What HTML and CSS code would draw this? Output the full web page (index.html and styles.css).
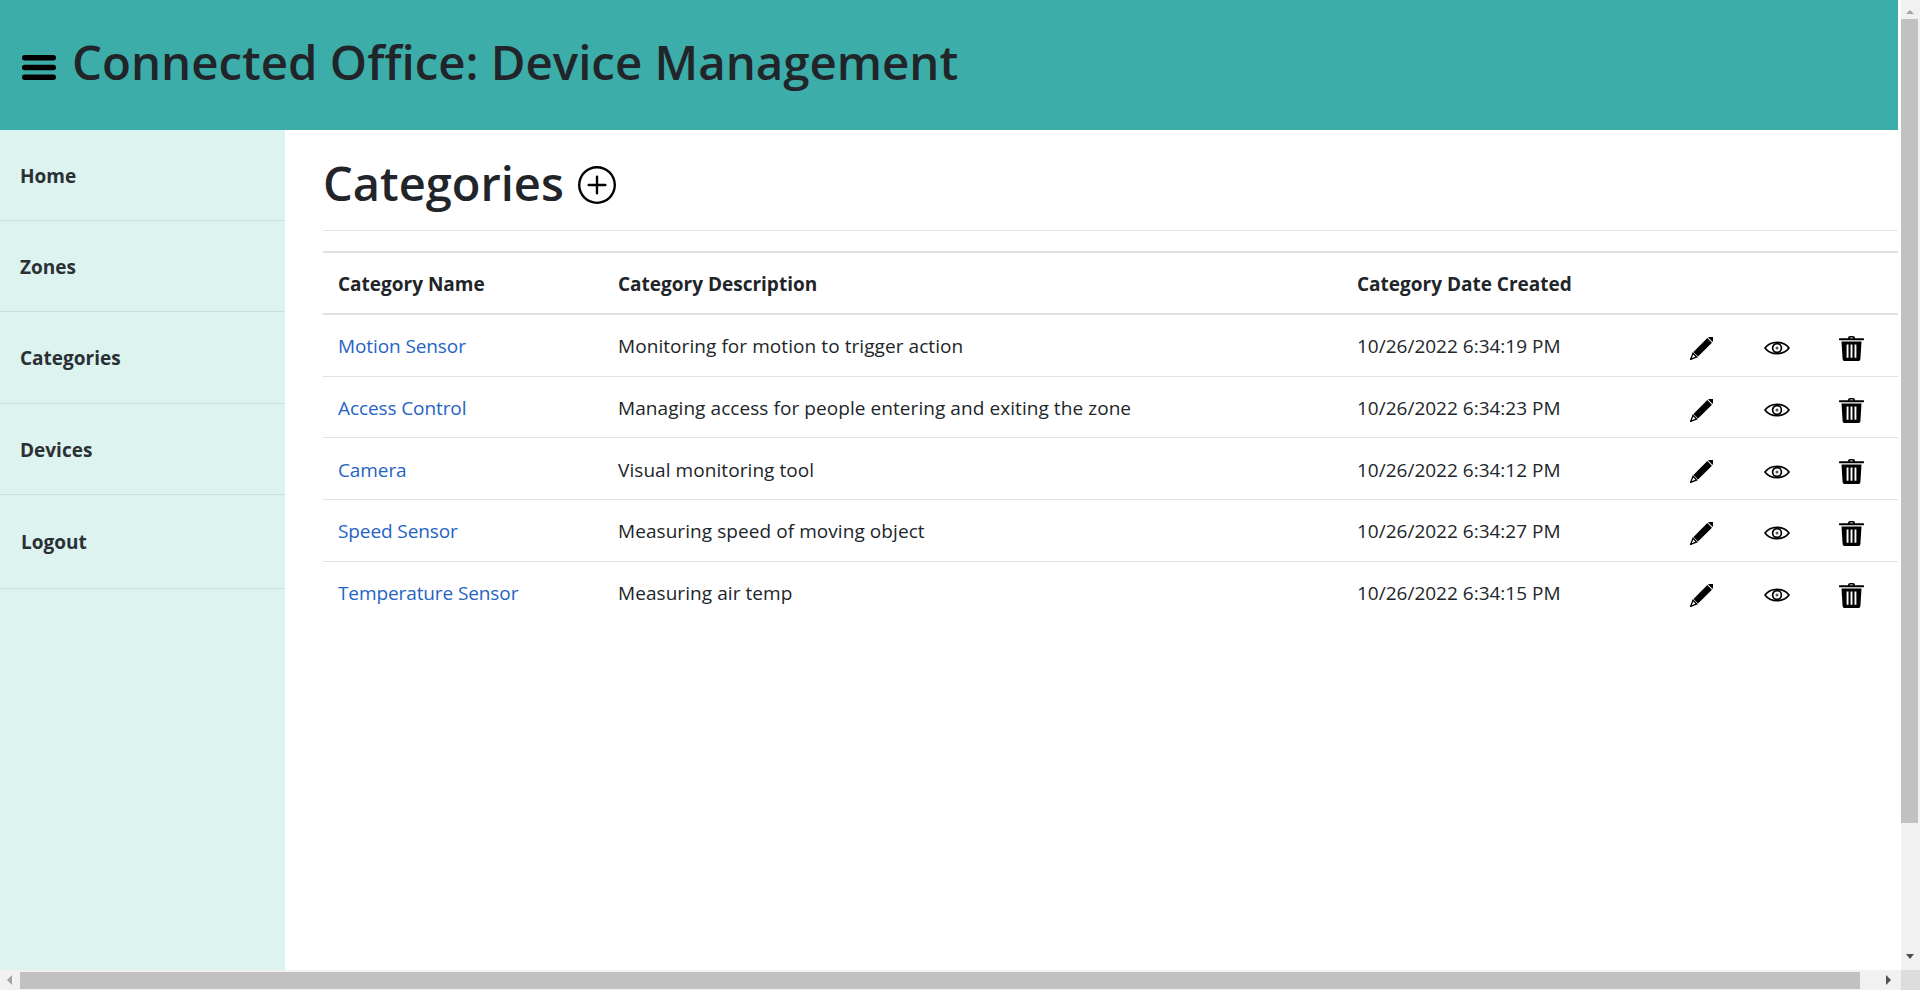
FILE: index.html
```html
<!DOCTYPE html>
<html lang="en">
<head>
    <meta charset="UTF-8">
    <title>Connected Office: Device Management</title>
    <link rel="stylesheet" href="styles.css">
</head>
<body>
    <svg class="icon-defs" width="0" height="0">
        <symbol id="i-pencil" viewBox="0 0 24 24">
            <g transform="rotate(45 12 12)">
                <rect x="8.6" y="-5" width="6.8" height="4" rx="1"/>
                <rect x="8.6" y="0" width="6.8" height="20.5"/>
                <path d="M9.3 21.8h5.4L12 28z" fill="none" stroke="#000" stroke-width="1.4"/>
                <path d="M10.9 26h2.2L12 29z"/>
            </g>
        </symbol>
        <symbol id="i-eye" viewBox="0 0 26 14">
            <path d="M1 7C6.5-.6 19.5-.6 25 7 19.5 14.6 6.5 14.6 1 7z" fill="none" stroke="#000" stroke-width="1.7"/>
            <circle cx="13" cy="7" r="4.4" fill="none" stroke="#000" stroke-width="1.7"/>
            <circle cx="13" cy="7" r="1.5" fill="#555"/>
        </symbol>
        <symbol id="i-trash" viewBox="0 0 25 25">
            <path d="M9 2.2C9 .8 10 0 11 0h3c1 0 2 .8 2 2.2h8.5c.3 0 .5.2.5.5v1.1c0 .3-.2.5-.5.5H.5C.2 4.300 0 4.100 0 3.800V2.700c0-.3.200-.5.500-.5zM10.700 2.200h3.600c0-.4-.2-.6-.6-.6h-2.400c-.4 0-.6.200-.6.600z" fill-rule="evenodd"/>
            <path d="M2.500 5.600h20l-1.100 17.300c-.1 1.200-1 2.100-2.200 2.100H5.800c-1.200 0-2.100-.9-2.200-2.100zM7.600 8.500v13.200h1.900V8.500zM11.550 8.500v13.200h1.900V8.500zM15.500 8.500v13.200h1.900V8.500z" fill-rule="evenodd"/>
        </symbol>
    </svg>

    <div class="viewport">
        <div class="page">
            <header class="topbar">
                <svg class="menu-icon" viewBox="0 0 34 25"><rect width="34" height="5.500" rx="2.700"/><rect y="9.800" width="34" height="5.500" rx="2.700"/><rect y="19.500" width="34" height="5.500" rx="2.700"/></svg>
                <h1 class="site-title">Connected Office: Device Management</h1>
            </header>
            <div class="layout">
                <nav class="sidebar">
                    <a class="nav-item" href="#">Home</a>
                    <a class="nav-item" href="#">Zones</a>
                    <a class="nav-item" href="#">Categories</a>
                    <a class="nav-item" href="#">Devices</a>
                    <a class="nav-item nav-logout" href="#">Logout</a>
                </nav>
                <main class="content">
                    <div class="page-head">
                        <h2 class="page-title">Categories</h2>
                        <svg class="add-icon" viewBox="0 0 16 16"><path d="M8 15A7 7 0 1 1 8 1a7 7 0 0 1 0 14zm0 1A8 8 0 1 0 8 0a8 8 0 0 0 0 16z"/><path d="M8 4a.5.5 0 0 1 .5.5v3h3a.5.5 0 0 1 0 1h-3v3a.5.5 0 0 1-1 0v-3h-3a.5.5 0 0 1 0-1h3v-3A.5.5 0 0 1 8 4z"/></svg>
                    </div>
                    <table class="data-table">
                        <colgroup>
                            <col class="col-name">
                            <col class="col-desc">
                            <col class="col-date">
                            <col class="col-action">
                            <col class="col-action">
                            <col>
                        </colgroup>
                        <thead>
                            <tr>
                                <th>Category Name</th>
                                <th>Category Description</th>
                                <th>Category Date Created</th>
                                <th></th>
                                <th></th>
                                <th></th>
                            </tr>
                        </thead>
                        <tbody>
                            <tr>
                                <td><a href="#">Motion Sensor</a></td>
                                <td class="desc">Monitoring for motion to trigger action</td>
                                <td>10/26/2022 6:34:19 PM</td>
                                <td class="action"><svg class="row-icon pencil"><use href="#i-pencil"/></svg></td>
                                <td class="action"><svg class="row-icon eye"><use href="#i-eye"/></svg></td>
                                <td class="action last"><svg class="row-icon trash"><use href="#i-trash"/></svg></td>
                            </tr>
                            <tr>
                                <td><a href="#">Access Control</a></td>
                                <td class="desc">Managing access for people entering and exiting the zone</td>
                                <td>10/26/2022 6:34:23 PM</td>
                                <td class="action"><svg class="row-icon pencil"><use href="#i-pencil"/></svg></td>
                                <td class="action"><svg class="row-icon eye"><use href="#i-eye"/></svg></td>
                                <td class="action last"><svg class="row-icon trash"><use href="#i-trash"/></svg></td>
                            </tr>
                            <tr>
                                <td><a href="#">Camera</a></td>
                                <td class="desc">Visual monitoring tool</td>
                                <td>10/26/2022 6:34:12 PM</td>
                                <td class="action"><svg class="row-icon pencil"><use href="#i-pencil"/></svg></td>
                                <td class="action"><svg class="row-icon eye"><use href="#i-eye"/></svg></td>
                                <td class="action last"><svg class="row-icon trash"><use href="#i-trash"/></svg></td>
                            </tr>
                            <tr>
                                <td><a href="#">Speed Sensor</a></td>
                                <td class="desc">Measuring speed of moving object</td>
                                <td>10/26/2022 6:34:27 PM</td>
                                <td class="action"><svg class="row-icon pencil"><use href="#i-pencil"/></svg></td>
                                <td class="action"><svg class="row-icon eye"><use href="#i-eye"/></svg></td>
                                <td class="action last"><svg class="row-icon trash"><use href="#i-trash"/></svg></td>
                            </tr>
                            <tr>
                                <td><a href="#">Temperature Sensor</a></td>
                                <td class="desc">Measuring air temp</td>
                                <td>10/26/2022 6:34:15 PM</td>
                                <td class="action"><svg class="row-icon pencil"><use href="#i-pencil"/></svg></td>
                                <td class="action"><svg class="row-icon eye"><use href="#i-eye"/></svg></td>
                                <td class="action last"><svg class="row-icon trash"><use href="#i-trash"/></svg></td>
                            </tr>
                        </tbody>
                    </table>
                </main>
            </div>
        </div>
        <div class="vbar">
            <span class="arrow arrow-up"></span>
            <div class="vthumb"></div>
            <span class="arrow arrow-down"></span>
        </div>
    </div>
    <div class="hbar">
        <span class="arrow arrow-left"></span>
        <div class="hthumb"></div>
        <span class="arrow arrow-right"></span>
        <div class="corner"></div>
    </div>
</body>
</html>
```

FILE: styles.css
```css
html, body {
    margin: 0;
    height: 100%;
    overflow: hidden;
}
body {
    display: flex;
    flex-direction: column;
    font-family: "Open Sans", "Noto Sans", Arial, sans-serif;
    color: #212529;
    background: #fff;
}
.icon-defs {
    display: none;
}
.viewport {
    flex: 1;
    display: flex;
    min-height: 0;
}
.page {
    flex: 1;
    display: flex;
    flex-direction: column;
    min-width: 0;
}

/* header */
.topbar {
    height: 130px;
    box-sizing: border-box;
    margin-right: 3px;
    background: #3cada9;
    display: flex;
    align-items: center;
    padding: 0 0 6px 22px;
    flex-shrink: 0;
}
.menu-icon {
    width: 34px;
    height: 25px;
    margin-right: 16px;
    margin-top: 10px;
    flex-shrink: 0;
}
.site-title {
    margin: 0;
    font-size: 47.4px;
    font-weight: 600;
    line-height: 1.2;
}

/* sidebar */
.layout {
    flex: 1;
    display: flex;
    min-height: 0;
}
.sidebar {
    width: 285px;
    flex-shrink: 0;
    background: #dcf3f0;
}
.nav-item {
    display: block;
    height: 91.2px;
    box-sizing: border-box;
    padding: 32px 20px 0;
    border-bottom: 1px solid #c8dedb;
    color: #2b3035;
    font-size: 19px;
    font-weight: 700;
    line-height: 28px;
    text-decoration: none;
}
.nav-logout {
    height: 94px;
    padding-top: 33px;
    padding-left: 21px;
}

/* content */
.content {
    flex: 1;
    min-width: 0;
    padding-left: 38px;
    padding-right: 3px;
}
.page-head {
    display: flex;
    align-items: center;
    height: 101px;
    box-sizing: border-box;
    border-bottom: 1px solid #e2e4e6;
    padding-top: 6px;
    margin-bottom: 20px;
}
.page-title {
    margin: 0;
    font-size: 47px;
    font-weight: 600;
    line-height: 1.2;
}
.add-icon {
    width: 38px;
    height: 38px;
    margin-left: 14px;
    margin-top: 4px;
}

/* table */
.data-table {
    width: 100%;
    table-layout: fixed;
    border-collapse: collapse;
    font-size: 19px;
}
.col-name { width: 280px; }
.col-desc { width: 739px; }
.col-date { width: 322px; }
.col-action { width: 75px; }
.data-table th {
    height: 58px;
    padding: 2px 15px 0;
    text-align: left;
    font-weight: 700;
    border-top: 2px solid #dee2e6;
    border-bottom: 2px solid #dee2e6;
}
.data-table td {
    height: 58.7px;
    padding: 2px 15px 0;
    border-bottom: 1px solid #dee2e6;
}
.data-table tbody tr:last-child td {
    border-bottom: 0;
}
.data-table a {
    color: #2563c4;
    text-decoration: none;
    letter-spacing: -0.1px;
}
.data-table .desc {
    letter-spacing: 0.07px;
}
.data-table .action {
    padding: 0;
    text-align: center;
}
.data-table .last {
    padding-right: 9px;
}
.row-icon {
    display: block;
    width: 24px;
    height: 24px;
    margin: 6px auto 0;
}
.row-icon.pencil {
    width: 23px;
    height: 23px;
}
.row-icon.eye {
    width: 26px;
    height: 14px;
}
.row-icon.trash {
    width: 25px;
    height: 25px;
}

/* fake native scrollbars */
.vbar {
    width: 17px;
    padding-right: 2px;
    background: #f1f1f1;
    display: flex;
    flex-direction: column;
    align-items: center;
    flex-shrink: 0;
}
.vthumb {
    width: 17px;
    height: 804px;
    background: #c1c1c1;
    margin: 5px 0 auto;
}
.hbar {
    height: 20px;
    background: #f1f1f1;
    display: flex;
    align-items: center;
    flex-shrink: 0;
}
.hthumb {
    width: 1840px;
    height: 17px;
    background: #c1c1c1;
    margin-left: 8px;
}
.corner {
    width: 19px;
    height: 100%;
    margin-left: auto;
    background: #dcdcdc;
}
.arrow {
    width: 0;
    height: 0;
    flex-shrink: 0;
    border-style: solid;
    border-color: transparent;
}
.arrow-up {
    margin-top: 10px;
    border-width: 0 4px 4px;
    border-bottom-color: #a3a3a3;
}
.arrow-down {
    margin-bottom: 11px;
    border-width: 5px 4px 0;
    border-top-color: #505050;
}
.arrow-left {
    margin-left: 7px;
    border-width: 5px 5px 5px 0;
    border-right-color: #a3a3a3;
}
.arrow-right {
    margin-left: 26px;
    border-width: 5px 0 5px 5px;
    border-left-color: #505050;
}
```
